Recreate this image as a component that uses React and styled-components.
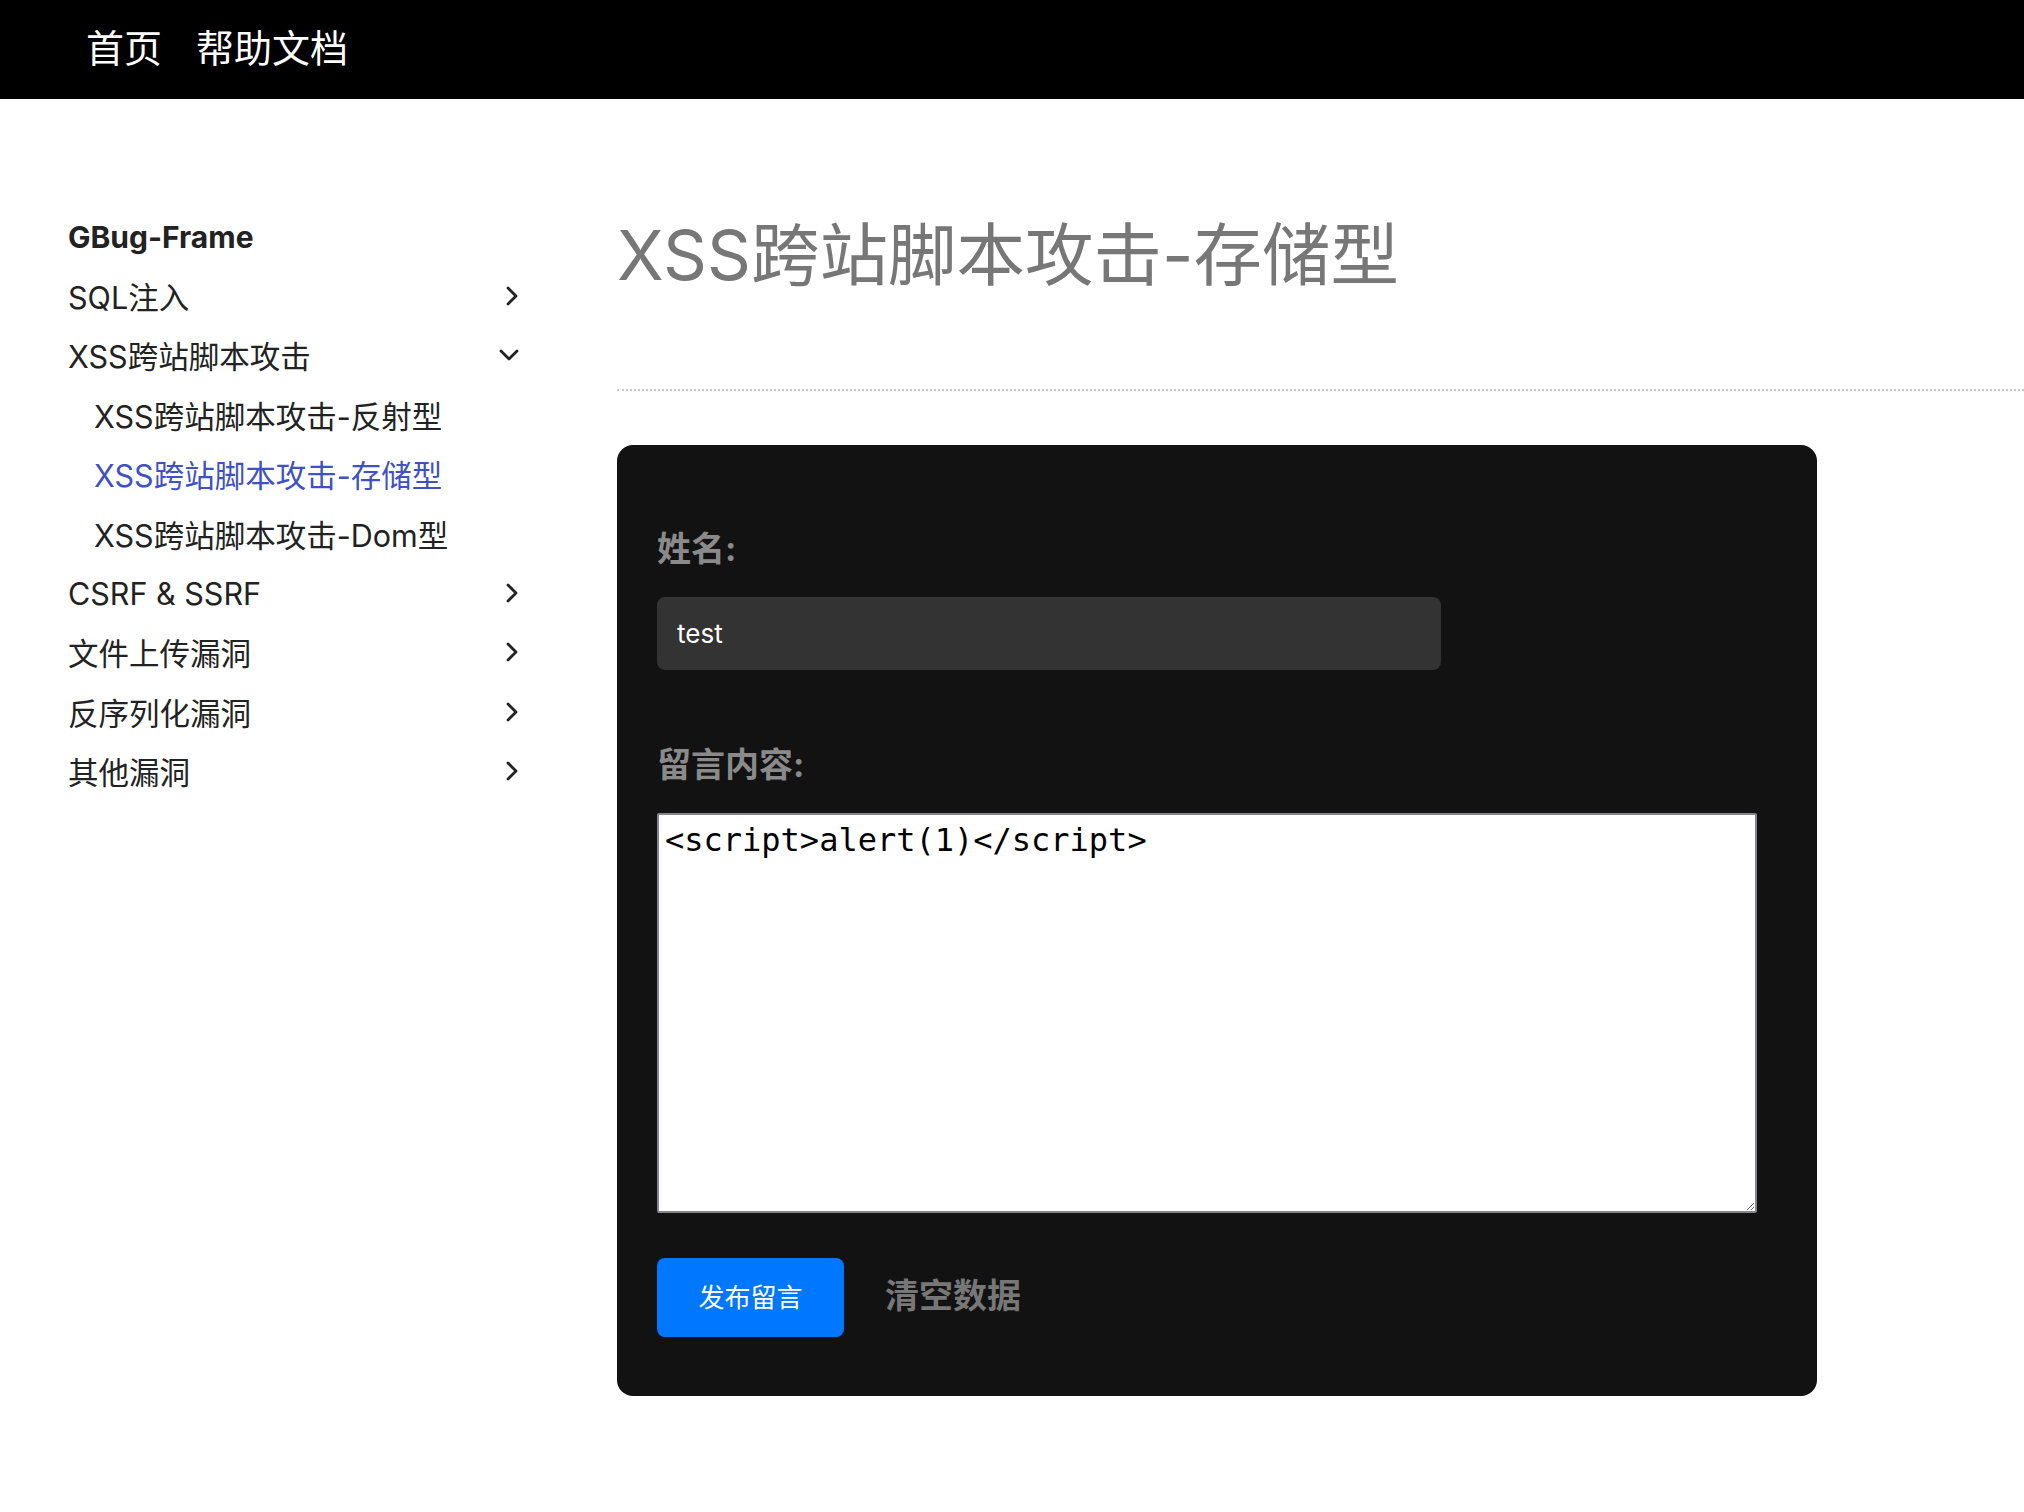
import styled, { createGlobalStyle } from "styled-components";

const GlobalStyle = createGlobalStyle`
  html, body {
    margin: 0;
    padding: 0;
    background: #fff;
    font-family: "Inter", "Noto Sans CJK SC", sans-serif;
  }
`;

const menu = [
  { label: "SQL注入", icon: "right" },
  {
    label: "XSS跨站脚本攻击",
    icon: "down",
    children: [
      { label: "XSS跨站脚本攻击-反射型" },
      { label: "XSS跨站脚本攻击-存储型", active: true },
      { label: "XSS跨站脚本攻击-Dom型" },
    ],
  },
  { label: "CSRF & SSRF", icon: "right" },
  { label: "文件上传漏洞", icon: "right" },
  { label: "反序列化漏洞", icon: "right" },
  { label: "其他漏洞", icon: "right" },
];

const Chevron = ({ dir }) =>
  dir === "down" ? (
    <svg width="22" height="14" viewBox="0 0 22 14">
      <polyline
        points="3,3 11,11 19,3"
        fill="none"
        stroke="#222"
        strokeWidth="2.8"
        strokeLinecap="round"
        strokeLinejoin="round"
      />
    </svg>
  ) : (
    <svg width="16" height="22" viewBox="0 0 16 22">
      <polyline
        points="4,3 12,11 4,19"
        fill="none"
        stroke="#222"
        strokeWidth="2.8"
        strokeLinecap="round"
        strokeLinejoin="round"
      />
    </svg>
  );

const App = () => {
  return (
    <>
      <GlobalStyle />
      <Header>
        <NavLink>首页</NavLink>
        <NavLink>帮助文档</NavLink>
      </Header>
      <Body>
        <Sidebar>
          <Brand>GBug-Frame</Brand>
          {menu.map((item) => (
            <div key={item.label}>
              <MenuItem>
                <span>{item.label}</span>
                <Chevron dir={item.icon} />
              </MenuItem>
              {item.children &&
                item.children.map((sub) => (
                  <SubItem key={sub.label} $active={sub.active}>
                    {sub.label}
                  </SubItem>
                ))}
            </div>
          ))}
        </Sidebar>
        <Main>
          <Title>XSS跨站脚本攻击-存储型</Title>
          <Divider />
          <Card>
            <Label>姓名:</Label>
            <NameInput defaultValue="test" />
            <Label>留言内容:</Label>
            <MessageArea defaultValue="<script>alert(1)</script>" />
            <Actions>
              <SubmitButton>发布留言</SubmitButton>
              <ClearLink>清空数据</ClearLink>
            </Actions>
          </Card>
        </Main>
      </Body>
    </>
  );
};

export default App;

const Header = styled.header`
  height: 99px;
  background: #000;
  display: flex;
  align-items: center;
  padding-left: 86px;
  gap: 34px;
  box-sizing: border-box;
`;

const NavLink = styled.a`
  color: #fff;
  font-size: 38px;
  line-height: 1;
  margin-top: -4px;
`;

const Body = styled.div`
  display: flex;
  padding-left: 68px;
`;

const Sidebar = styled.nav`
  width: 452px;
  padding-top: 108px;
  flex-shrink: 0;
`;

const Brand = styled.div`
  height: 59.4px;
  display: flex;
  align-items: center;
  font-size: 30px;
  font-weight: 700;
  color: #222;
`;

const MenuItem = styled.div`
  height: 59.4px;
  display: flex;
  align-items: center;
  justify-content: space-between;
  font-size: 30.5px;
  color: #222;
`;

const SubItem = styled.div`
  height: 59.4px;
  display: flex;
  align-items: center;
  padding-left: 26px;
  font-size: 30.5px;
  color: ${(p) => (p.$active ? "#3f51c5" : "#222")};
`;

const Main = styled.main`
  flex: 1;
  margin-left: 97px;
  padding-top: 118px;
`;

const Title = styled.h1`
  margin: 0;
  font-size: 68.5px;
  font-weight: 400;
  line-height: 78px;
  color: #777;
`;

const Divider = styled.hr`
  margin: 94px 0 0;
  border: 0;
  border-top: 2px dotted #c8c8c8;
`;

const Card = styled.section`
  width: 1200px;
  margin-top: 54px;
  background: #121212;
  border-radius: 16px;
  padding: 40px 40px 59px;
  box-sizing: border-box;
  display: flex;
  flex-direction: column;
  align-items: flex-start;
`;

const Label = styled.label`
  margin-top: 40px;
  margin-bottom: 24px;
  font-size: 34px;
  line-height: 48px;
  font-weight: 700;
  color: #8a8a8a;
`;

const NameInput = styled.input`
  width: 784px;
  height: 73px;
  box-sizing: border-box;
  border: 0;
  border-radius: 8px;
  background: #333;
  color: #fff;
  padding: 0 20px;
  font-family: "Inter", sans-serif;
  font-size: 26px;
  outline: none;
  margin-bottom: 31px;
`;

const MessageArea = styled.textarea`
  width: 1100px;
  height: 400px;
  box-sizing: border-box;
  border: 2px solid #85848f;
  border-radius: 2px;
  background: #fff;
  padding: 6px 6px;
  font-family: "DejaVu Sans Mono", monospace;
  font-size: 32px;
  line-height: 1.2;
  color: #000;
  outline: none;
`;

const Actions = styled.div`
  display: flex;
  align-items: center;
  gap: 41px;
  margin-top: 45px;
`;

const SubmitButton = styled.button`
  width: 187px;
  height: 79px;
  border: 0;
  border-radius: 8px;
  background: #0077ff;
  color: #fff;
  font-family: "Inter", "Noto Sans CJK SC", sans-serif;
  font-size: 26px;
  padding: 0 0 4px;
  cursor: pointer;
`;

const ClearLink = styled.a`
  font-size: 34px;
  font-weight: 700;
  color: #777;
  margin-top: -8px;
  cursor: pointer;
`;
